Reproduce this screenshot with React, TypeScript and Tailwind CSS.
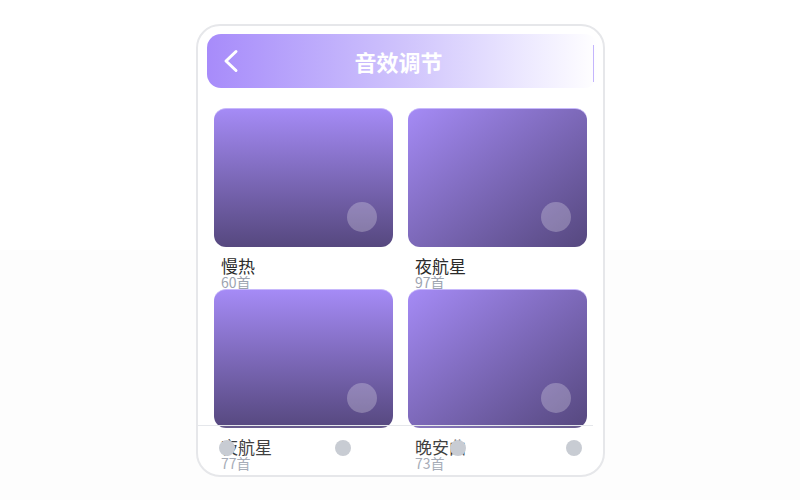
import React from "react";

type Album = {
  name: string;
  count: number;
  diagonal: boolean;
};

const albums: Album[] = [
  { name: "慢热", count: 60, diagonal: false },
  { name: "夜航星", count: 97, diagonal: true },
  { name: "夜航星", count: 77, diagonal: false },
  { name: "晚安曲", count: 73, diagonal: true },
];

const AlbumCard = ({ name, count, diagonal }: Album) => (
  <div className="flex flex-col">
    <div
      className={
        diagonal
          ? "relative h-[139px] rounded-[12px] border-t border-[#c7b8fb] bg-gradient-to-br from-[#a58bf6] to-[#56487f]"
          : "relative h-[139px] rounded-[12px] border-t border-[#c7b8fb] bg-gradient-to-b from-[#a58bf6] to-[#56487f]"
      }
    >
      <div className="absolute right-[16px] bottom-[15px] h-[30px] w-[30px] rounded-full bg-white/25" />
    </div>
    <div className="pl-[7px] pt-[9px] h-[42px]">
      <div className="text-[17px] leading-[19px] text-[#2b2b2b]">{name}</div>
      <div className="text-[14px] leading-[14px] text-[#9ca3af]">{count}首</div>
    </div>
  </div>
);

export default function App() {
  return (
    <div
      className="h-[500px] w-[800px] pt-[24px] bg-[linear-gradient(to_bottom,#ffffff_50%,#fdfdfd_50%)]"
      style={{ fontFamily: '"Noto Sans CJK SC", "Noto Sans", sans-serif' }}
    >
      <div className="relative ml-[196px] h-[453px] w-[409px] overflow-hidden rounded-[24px] border-2 border-[#e6e7ea] bg-white">
        {/* Header */}
        <div className="relative ml-[9px] mt-[8px] flex h-[54px] w-[391px] items-center rounded-[14px] bg-gradient-to-r from-[#a78bfa] via-[#cfc3fc] to-[#ffffff]">
          <svg
            width="16"
            height="24"
            viewBox="0 0 16 24"
            className="ml-[16px]"
            fill="none"
            stroke="white"
            strokeWidth="3"
            strokeLinecap="round"
            strokeLinejoin="round"
          >
            <path d="M13 2.5 L3 12 L13 21.5" />
          </svg>
          <div className="absolute left-0 right-0 text-center text-[22px] font-bold text-white pr-[8px]">
            音效调节
          </div>
          <div className="absolute right-[4px] top-[11px] h-[37px] w-px bg-[#c4b5fd]" />
        </div>

        {/* Grid */}
        <div className="mt-[20px] grid grid-cols-2 gap-x-[15px] px-[16px]">
          {albums.map((a, i) => (
            <AlbumCard key={i} {...a} />
          ))}
        </div>

        {/* Bottom bar */}
        <div className="absolute bottom-0 left-0 right-[10px] flex h-[50px] items-start justify-between border-t border-[#e5e7eb] bg-white/10 pl-[21px] pr-[11px] pt-[14px]">
          {[0, 1, 2, 3].map((i) => (
            <div key={i} className="h-[16px] w-[16px] rounded-full bg-[#c8ccd3]" />
          ))}
        </div>
      </div>
    </div>
  );
}
